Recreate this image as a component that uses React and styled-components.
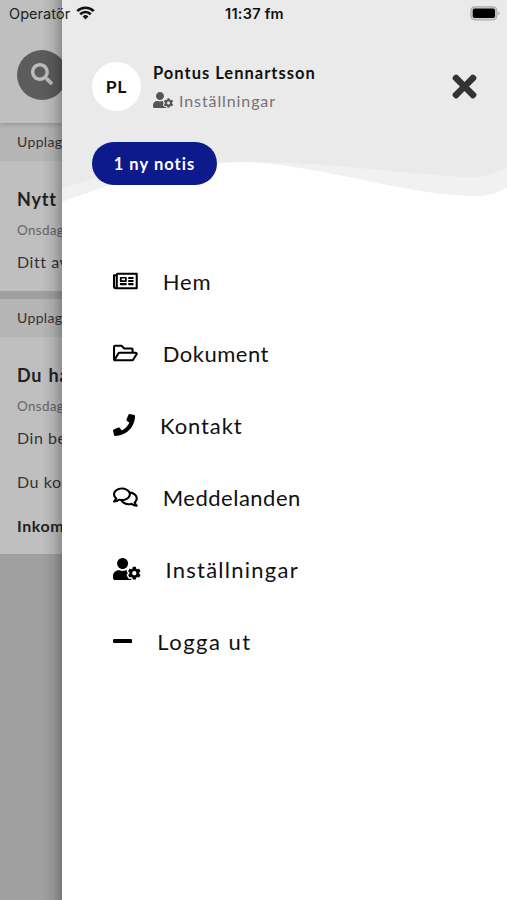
import styled, {createGlobalStyle} from "styled-components";
import {
    FaRegNewspaper,
    FaRegFolderOpen,
    FaPhone,
    FaRegComments,
    FaUserCog,
    FaMinus,
    FaTimes,
    FaSearch,
} from "react-icons/fa";

const GlobalStyle = createGlobalStyle`
    *{
        box-sizing: border-box;
    }
    body{
        margin: 0;
        font-family: Lato, sans-serif;
        color: #111;
    }
    h2, p, ul{
        margin: 0;
        padding: 0;
        font-weight: 400;
    }
    ul{
        list-style: none;
    }
    button{
        padding: 0;
        border: 0;
        font-family: inherit;
        background: none;
    }
`;
const Screen = styled.div`
    overflow: hidden;
    position: relative;
    display: flex;
    width: 507px;
    height: 900px;
    background: #fff;
`;
const StatusBar = styled.div`
    position: absolute;
    top: 0;
    left: 0;
    display: grid;
    grid-template-columns: 1fr auto 1fr;
    align-items: center;
    padding: 0 7px 0 9px;
    width: 100%;
    height: 27px;
    font-family: Inter, sans-serif;
    font-size: 14.5px;
    color: #222;
    z-index: 3;
`;
const Carrier = styled.div`
    display: flex;
    align-items: center;
    gap: 6px;
    letter-spacing: .05px;

    svg{
        margin-top: -2px;
    }
`;
const Clock = styled.div`
    font-weight: 600;
    letter-spacing: .25px;
    color: #111;
`;
const Battery = styled.svg`
    justify-self: end;
`;
const Page = styled.div`
    overflow: hidden;
    position: relative;
    flex: none;
    width: 61.5px;
    background: #a0a0a0;
    white-space: nowrap;

    &::after{
        content: "";
        position: absolute;
        top: 0;
        right: 0;
        width: 20px;
        height: 100%;
        background: linear-gradient(to right, rgba(0,0,0,0), rgba(0,0,0,.08) 55%, rgba(0,0,0,.25));
        z-index: 2;
    }
`;
const PageHeader = styled.div`
    position: relative;
    padding: 50px 0 0 17px;
    height: 123px;
    background: #bfbfbf;
    box-shadow: 0 1px 5px rgba(0,0,0,.22);
    z-index: 1;
`;
const SearchButton = styled.button`
    display: flex;
    align-items: center;
    justify-content: center;
    padding-bottom: 3px;
    width: 50px;
    height: 50px;
    border-radius: 50%;
    font-size: 22px;
    color: #bdbdbd;
    background: #5c5c5c;
`;
const Post = styled.div`
    margin-bottom: 8px;
    height: ${({$height}) => $height}px;
    background: #bfbfbf;
`;
const PostBar = styled.div`
    padding-left: 17px;
    height: 38px;
    font-size: 14px;
    line-height: 38px;
    letter-spacing: .35px;
    color: #333;
    background: #b5b5b5;
`;
const PostBody = styled.div`
    padding: 23px 0 0 17px;
`;
const PostTitle = styled.h2`
    font-size: 18px;
    font-weight: 700;
    line-height: 30px;
    letter-spacing: .8px;
    word-spacing: ${({$gap}) => $gap || 0}px;
    color: #222;
`;
const PostDate = styled.p`
    font-size: 13.5px;
    line-height: 32px;
    letter-spacing: .3px;
    color: #666;
`;
const PostText = styled.p`
    margin-bottom: 12px;
    font-size: 16px;
    font-weight: ${({$bold}) => $bold ? 700 : 400};
    line-height: 32px;
    letter-spacing: .55px;
    color: ${({$bold}) => $bold ? "#222" : "#333"};
`;
const Drawer = styled.div`
    position: relative;
    flex: 1;
    background: #fff;
    z-index: 2;
`;
const DrawerTop = styled.div`
    position: relative;
    padding: 62px 30px 0 30.5px;
    height: 205px;
`;
const Wave = styled.svg`
    position: absolute;
    top: 0;
    left: 0;
    z-index: -1;
`;
const Profile = styled.div`
    display: flex;
    align-items: center;
    height: 49px;
`;
const Avatar = styled.div`
    display: flex;
    align-items: center;
    justify-content: center;
    width: 49px;
    height: 49px;
    border-radius: 50%;
    font-size: 17.5px;
    font-weight: 700;
    letter-spacing: .8px;
    background: #fff;
`;
const UserInfo = styled.div`
    flex: 1;
    padding-left: 12px;
`;
const UserName = styled.p`
    font-size: 16.5px;
    font-weight: 700;
    line-height: 27px;
    letter-spacing: 1px;
`;
const UserLink = styled.p`
    display: flex;
    align-items: center;
    gap: 6px;
    font-size: 16px;
    line-height: 27px;
    letter-spacing: .9px;
    color: #737373;

    svg{
        color: #555;
    }
`;
const CloseButton = styled.button`
    display: flex;
    margin-right: -5px;
    padding-bottom: 1px;
    font-size: 35px;
    color: #333;
`;
const Notice = styled.button`
    display: block;
    margin-top: 31px;
    width: 125px;
    height: 43px;
    border-radius: 22px;
    font-size: 16.5px;
    font-weight: 700;
    letter-spacing: 1.05px;
    color: #fff;
    background: #0c1a8c;
`;
const Menu = styled.ul`
    padding: 40px 0 0 51.5px;
`;
const MenuItem = styled.li`
    display: flex;
    align-items: center;
    gap: 25px;
    height: 72px;
    font-size: 22px;
    letter-spacing: ${({$spacing}) => $spacing}px;
    color: #111;

    svg{
        flex: none;
        width: ${({$icon}) => $icon}px;
        height: 22px;
        color: #000;
    }
`;

const menu = [
    {icon: FaRegNewspaper, width: 24.75, label: "Hem", spacing: .9},
    {icon: FaRegFolderOpen, width: 24.75, label: "Dokument", spacing: .5},
    {icon: FaPhone, width: 22, label: "Kontakt", spacing: .9},
    {icon: FaRegComments, width: 24.75, label: "Meddelanden", spacing: .5},
    {icon: FaUserCog, width: 27.5, label: "Inställningar", spacing: 1.25},
    {icon: FaMinus, width: 19.25, label: "Logga ut", spacing: 1.5},
];

function Wifi() {
    return (
        <svg width="19" height="14" viewBox="0 0 19 14" fill="none" stroke="#111" strokeWidth="2.6">
            <path d="M1.3 5.1A11.7 11.7 0 0 1 17.7 5.1" />
            <path d="M4.2 8.2A7.6 7.6 0 0 1 14.8 8.2" />
            <path d="M9.5 13.4L6.6 10.4A4.2 4.2 0 0 1 12.4 10.4Z" fill="#111" stroke="none" />
        </svg>
    );
}

function App() {
    return (
        <Screen>
            <GlobalStyle />
            <StatusBar>
                <Carrier>
                    Operatör
                    <Wifi />
                </Carrier>
                <Clock>11:37 fm</Clock>
                <Battery width="30" height="15" viewBox="0 0 30 15">
                    <rect x=".9" y=".8" width="26" height="13" rx="4" fill="#d2d2d2" stroke="#aaa" strokeWidth="1.2" />
                    <rect x="2.7" y="2.6" width="22.4" height="9.4" rx="2" fill="#000" />
                    <path d="M28.3 5.2Q31 7.3 28.3 9.4Z" fill="#aaa" />
                </Battery>
            </StatusBar>
            <Page>
                <PageHeader>
                    <SearchButton><FaSearch /></SearchButton>
                </PageHeader>
                <Post $height={168}>
                    <PostBar>Upplag</PostBar>
                    <PostBody>
                        <PostTitle>Nytt</PostTitle>
                        <PostDate>Onsdag</PostDate>
                        <PostText>Ditt av</PostText>
                    </PostBody>
                </Post>
                <Post $height={255}>
                    <PostBar>Upplag</PostBar>
                    <PostBody>
                        <PostTitle $gap={1}>Du ha</PostTitle>
                        <PostDate>Onsdag</PostDate>
                        <PostText>Din be</PostText>
                        <PostText>Du kon</PostText>
                        <PostText $bold>Inkom</PostText>
                    </PostBody>
                </Post>
            </Page>
            <Drawer>
                <DrawerTop>
                    <Wave width="446" height="205" viewBox="0 0 446 205">
                        <path d="M0 0H446V187C432 195 422 197 405 196C330 192 250 163 180 162C110 163 40 187 0 202Z" fill="#f1f1f1" />
                        <path d="M0 0H446V167C432 174 425 177 405 177C350 175 270 162 180 162C100 161 45 172 0 189Z" fill="#eaeaea" />
                    </Wave>
                    <Profile>
                        <Avatar>PL</Avatar>
                        <UserInfo>
                            <UserName>Pontus Lennartsson</UserName>
                            <UserLink><FaUserCog size={20} />Inställningar</UserLink>
                        </UserInfo>
                        <CloseButton><FaTimes /></CloseButton>
                    </Profile>
                    <Notice>1 ny notis</Notice>
                </DrawerTop>
                <Menu>
                    {menu.map(({icon: Icon, width, label, spacing}) => (
                        <MenuItem key={label} $icon={width} $spacing={spacing}>
                            <Icon />
                            {label}
                        </MenuItem>
                    ))}
                </Menu>
            </Drawer>
        </Screen>
    );
}

export default App;
